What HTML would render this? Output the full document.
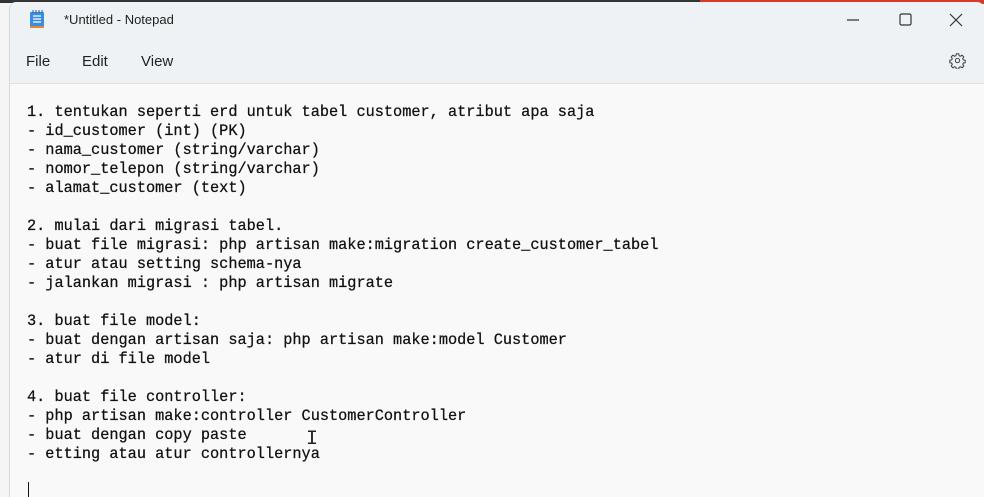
<!DOCTYPE html>
<html><head><style>
html,body{margin:0;padding:0;width:984px;height:497px;overflow:hidden;background:#f3f3f3;font-family:"Liberation Sans",sans-serif}
.bgl{position:absolute;left:0;top:0;width:10px;height:497px;background:#f5f5f5}
.topred{position:absolute;left:700px;top:0;width:284px;height:4px;background:#d83a2a}
.topdark{position:absolute;left:0;top:0;width:700px;height:3px;background:#333}
.win{position:absolute;left:9px;top:2px;width:974px;height:495px;background:#eef2f5;border-radius:7px 7px 0 0;border-left:1px solid #d8d8d8;overflow:hidden}
.title{position:absolute;left:54px;top:10px;font-size:13px;color:#222}
.menu{position:absolute;top:51px;font-size:15px;color:#222}
.edit{position:absolute;left:0;top:81px;width:974px;height:420px;background:#f9f9f9;border-top:1px solid #e2e2e2}
pre{position:absolute;left:17px;top:101px;margin:0;font-family:"Liberation Mono",monospace;font-size:15.25px;line-height:19px;color:#111;-webkit-text-stroke:0.25px #111}
</style></head><body>
<div class="bgl"></div><div class="topdark"></div><div class="topred"></div>
<div class="win">
 <svg style="position:absolute;left:20px;top:8px" width="14" height="18" viewBox="0 0 14 18"><rect x="0" y="2" width="14" height="16" rx="1" fill="#3a8ee0"/><rect x="0" y="16" width="14" height="2" fill="#e08a2a"/><g stroke="#fff" stroke-width="1.2"><line x1="3" y1="6" x2="11" y2="6"/><line x1="3" y1="9" x2="11" y2="9"/><line x1="3" y1="12" x2="11" y2="12"/></g><g stroke="#1d5fa8" stroke-width="1"><line x1="3" y1="0" x2="3" y2="3"/><line x1="6" y1="0" x2="6" y2="3"/><line x1="9" y1="0" x2="9" y2="3"/><line x1="12" y1="0" x2="12" y2="3"/></g></svg>
 <div class="title">*Untitled - Notepad</div>
 <div class="menu" style="left:16px">File</div>
 <div class="menu" style="left:72px">Edit</div>
 <div class="menu" style="left:131px">View</div>
 <svg style="position:absolute;left:836px;top:10px" width="130" height="16" viewBox="0 0 130 16"><line x1="1" y1="8" x2="13" y2="8" stroke="#333" stroke-width="1.2"/><rect x="54" y="2" width="11" height="11" rx="1.5" fill="none" stroke="#333" stroke-width="1.2"/><path d="M104 2L116 14M116 2L104 14" stroke="#333" stroke-width="1.2"/></svg>
 <svg style="position:absolute;left:939px;top:50px" width="17" height="17" viewBox="0 0 24 24" fill="none" stroke="#444" stroke-width="1.5"><circle cx="12" cy="12" r="3"/><path d="M10.3 2.5h3.4l.6 2.7 1.9.8 2.3-1.5 2.4 2.4-1.5 2.3.8 1.9 2.7.6v3.4l-2.7.6-.8 1.9 1.5 2.3-2.4 2.4-2.3-1.5-1.9.8-.6 2.7h-3.4l-.6-2.7-1.9-.8-2.3 1.5-2.4-2.4 1.5-2.3-.8-1.900-2.7-.6v-3.4l2.7-.6.8-1.9-1.5-2.3 2.4-2.4 2.3 1.5 1.9-.8z"/></svg>
 <div class="edit"></div>
 <pre>1. tentukan seperti erd untuk tabel customer, atribut apa saja
- id_customer (int) (PK)
- nama_customer (string/varchar)
- nomor_telepon (string/varchar)
- alamat_customer (text)

2. mulai dari migrasi tabel.
- buat file migrasi: php artisan make:migration create_customer_tabel
- atur atau setting schema-nya
- jalankan migrasi : php artisan migrate

3. buat file model:
- buat dengan artisan saja: php artisan make:model Customer
- atur di file model

4. buat file controller:
- php artisan make:controller CustomerController
- buat dengan copy paste
- etting atau atur controllernya
</pre>
 <div style="position:absolute;left:18px;top:480px;width:1px;height:16px;background:#111"></div>
 <div style="position:absolute;left:296px;top:426px;font-family:'Liberation Mono',monospace;font-size:20px;color:#222">I</div>
</div>
</body></html>
